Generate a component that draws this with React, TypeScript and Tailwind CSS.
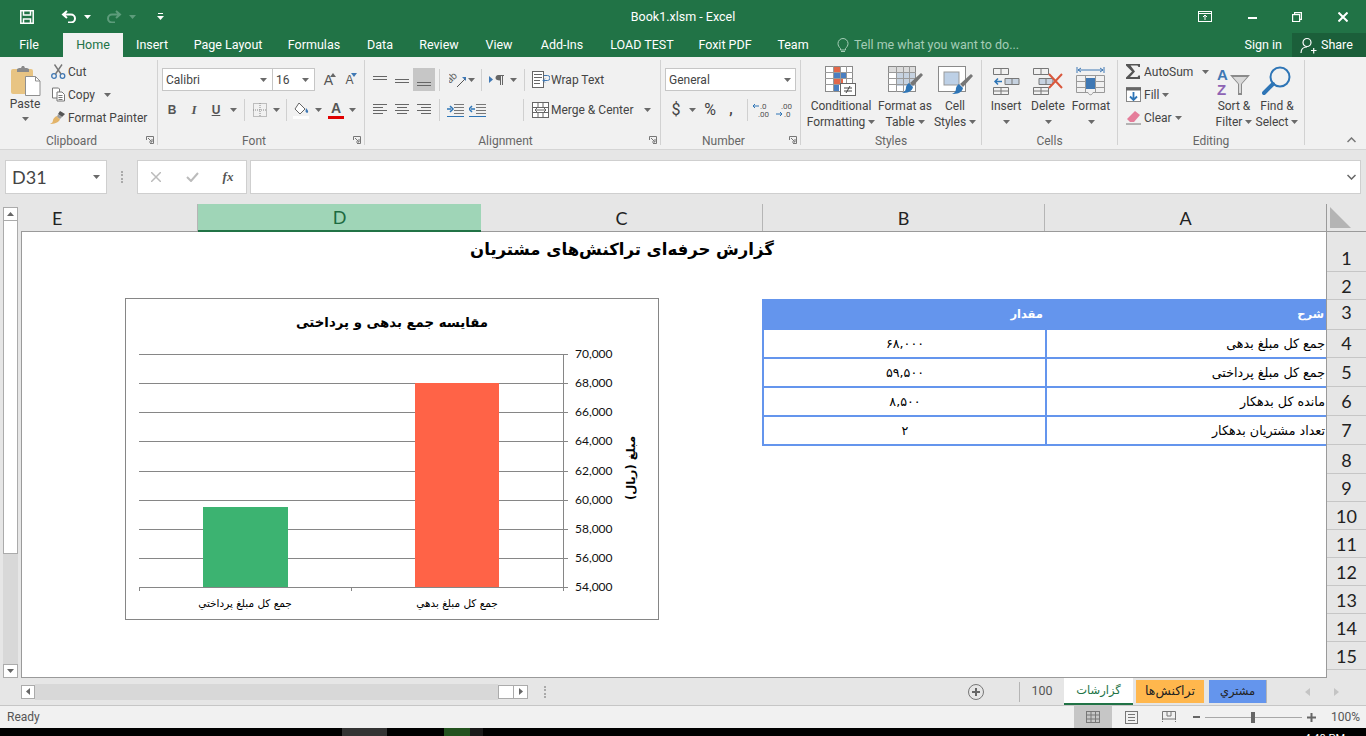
import React from "react";

const Caret = ({ c = "#6a6a6a" }: { c?: string }) => (
  <svg width="7" height="4" viewBox="0 0 7 4"><path d="M0 0h7L3.5 4z" fill={c} /></svg>
);
const Sep = ({ cls = "" }: { cls?: string }) => <div className={`w-px h-[22px] bg-[#d0d0d0] ${cls}`} />;
const Launcher = () => (
  <svg width="8" height="8" viewBox="0 0 8 8" fill="none" stroke="#777"><path d="M.5 4V.5H7.5V7.5H4" /><path d="M2 2l3.5 3.5M3 6h3V3" /></svg>
);
const Group = ({ cls, label, launch, children }: { cls: string; label: string; launch?: boolean; children: React.ReactNode }) => (
  <div className={`${cls} relative flex flex-col h-full border-r border-[#d2d2d2] my-0`}>
    <div className="h-[75px] shrink-0">{children}</div>
    <div className={`h-[15px] flex items-center justify-center text-[#666] text-[12px] leading-none ${launch ? "pr-[14px]" : ""}`}>{label}</div>
    {launch && <div className="absolute right-[3px] bottom-[1px]"><Launcher /></div>}
  </div>
);
const Big = ({ cls, icon, l1, l2, caret = true }: { cls: string; icon: React.ReactNode; l1: string; l2?: string; caret?: boolean }) => (
  <div className={`${cls} flex flex-col items-center pt-[6px]`}>
    <div className="h-[30px] flex items-center justify-center">{icon}</div>
    <div className="mt-[2px] h-[16px] leading-[16px] whitespace-nowrap">{l1}</div>
    <div className="h-[16px] leading-[16px] whitespace-nowrap flex items-center gap-[3px]">{l2}{caret && <Caret />}</div>
  </div>
);
const Small = ({ icon, text, caret, iconW = "w-[18px]", capCls = "" }: { icon: React.ReactNode; text: string; caret?: boolean; iconW?: string; capCls?: string }) => (
  <div className="h-[23px] flex items-center whitespace-nowrap">
    <div className={`${iconW} flex justify-center shrink-0`}>{icon}</div>
    <span className="ml-[1px]">{text}</span>
    {caret && <span className={`flex ${capCls}`}><Caret /></span>}
  </div>
);
const Slot = ({ cls, children }: { cls: string; children?: React.ReactNode }) => (
  <div className={`${cls} h-full flex items-center justify-center shrink-0`}>{children}</div>
);
const Lines = ({ rows, c = "#666" }: { rows: [number, number, number][]; c?: string }) => (
  <svg width="16" height="14" viewBox="0 0 16 14" stroke={c} strokeWidth="1">
    {rows.map(([x1, x2, y], i) => <line key={i} x1={x1} x2={x2} y1={y + 0.5} y2={y + 0.5} />)}
  </svg>
);
const Indent = ({ dir }: { dir: 1 | -1 }) => (
  <svg width="17" height="14" viewBox="0 0 17 14" fill="none">
    <path d="M7 1.5h10M7 4.5h10M7 7.5h10M7 10.5h10" stroke="#777" />
    <path d="M0 13.5h17" stroke="#2e75b6" />
    {dir === 1
      ? <path d="M0 6h4M3 3l3 3-3 3" stroke="#2e75b6" strokeWidth="1.5" />
      : <path d="M6 6H2M3 3L0 6l3 3" stroke="#2e75b6" strokeWidth="1.5" />}
  </svg>
);
const Paste = () => (
  <svg width="31" height="31" viewBox="0 0 31 31">
    <rect x="1" y="4" width="22" height="25" rx="2" fill="#e8c483" />
    <path d="M7 4l2-1h2l1-2h2l1 2h2l2 1v3H7z" fill="#8a8a8a" />
    <path d="M15.500 11.500h10l4.500 4.500v14.500h-14.500z" fill="#fff" stroke="#8f8f8f" />
    <path d="M25.500 11.500v4.500h4.500" fill="none" stroke="#8f8f8f" />
  </svg>
);
const Scissors = () => (
  <svg width="15" height="15" viewBox="0 0 15 15" fill="none">
    <circle cx="3" cy="12" r="2.300" stroke="#3f78b4" strokeWidth="1.300" />
    <circle cx="11.500" cy="12" r="2.300" stroke="#3f78b4" strokeWidth="1.300" />
    <path d="M4.500 10L11 .5M10 10L3.500.5" stroke="#777" strokeWidth="1.400" />
  </svg>
);
const CopyIc = () => (
  <svg width="15" height="15" viewBox="0 0 15 15" fill="#fff" stroke="#777">
    <path d="M1.500 1h6l1 1v9h-7z" /><path d="M6 5h5l2.500 2.500V14H6z" /><path d="M7.500 8.500h4M7.500 10.500h4M7.500 12.500h4" />
  </svg>
);
const Painter = () => (
  <svg width="17" height="15" viewBox="0 0 17 15">
    <path d="M10 1l5 3-3 3-4-3z" fill="#555" />
    <path d="M8 4l4 3-2 2-3-2z" fill="#9a9a9a" />
    <path d="M6.500 6L10 9.500C8 13 4 14 0 14c2-1 3-2 3-4 .5-2 2-3 3.500-4z" fill="#e3b469" />
  </svg>
);
const Grow = ({ up }: { up: boolean }) => (
  <div className="relative flex items-center justify-center h-full w-full">
    <span className={`${up ? "text-[14px]" : "text-[12px]"} text-[#555] font-['Liberation_Sans'] leading-none`}>A</span>
    <svg className="absolute top-[5px] right-[3px]" width="6" height="4" viewBox="0 0 6 4">
      <path d={up ? "M0 4h6L3 0z" : "M0 0h6L3 4z"} fill={up ? "#666" : "#3f78b4"} />
    </svg>
  </div>
);
const Borders = () => (
  <svg width="14" height="14" viewBox="0 0 14 14" fill="none" stroke="#888" strokeDasharray="1 1">
    <rect x=".5" y=".5" width="13" height="13" /><path d="M7 0v14M0 7h14" />
  </svg>
);
const Bucket = () => (
  <svg width="18" height="17" viewBox="0 0 18 17">
    <rect x="0" y="14" width="16" height="3" fill="#fdfdfd" />
    <path d="M6 1l6 6-5 5-5-5z" fill="#fff" stroke="#666" />
    <path d="M13 6c1.500 1.500 2.500 3 2 4.500-1 .8-2.500 0-2.500-1.500z" fill="#3f78b4" />
  </svg>
);
const Orient = () => (
  <svg width="18" height="18" viewBox="0 0 18 18">
    <text x="1" y="13" transform="rotate(-45 1 13)" fontSize="10" fill="#666" fontFamily="Roboto">ab</text>
    <path d="M8 16L16 8" stroke="#555" /><path d="M13 6h4v4z" fill="#3f78b4" />
  </svg>
);
const Rtl = () => (
  <svg width="16" height="12" viewBox="0 0 16 12">
    <path d="M0 2l4 3.500L0 9z" fill="#3f78b4" />
    <path d="M9 1h6v1h-1v9h-1V2h-1v9h-1V6.500C8 6.500 6.500 5.500 6.500 3.800S8 1 9 1z" fill="#666" />
  </svg>
);
const WrapIc = () => (
  <svg width="18" height="17" viewBox="0 0 18 17" fill="none" stroke="#666">
    <rect x=".5" y=".5" width="11" height="16" fill="#fff" />
    <path d="M2 3.500h8M2 6.500h8M2 9.500h6M2 12.500h6" />
    <path d="M12 4.500h3.500a2 2 0 010 5H11" stroke="#3f78b4" /><path d="M13 7.500l-2 2 2 2" stroke="#3f78b4" />
  </svg>
);
const MergeIc = () => (
  <svg width="17" height="16" viewBox="0 0 17 16" fill="#fff" stroke="#666">
    <rect x=".5" y=".5" width="16" height="15" />
    <path d="M.5 5.500h16M.5 10.500h16M6 .5v5M11 .5v5M6 10.500v5M11 10.500v5" />
    <path d="M3 8h11M5 6l-2 2 2 2M12 6l2 2-2 2" fill="none" />
  </svg>
);
const CondF = () => (
  <svg width="32" height="31" viewBox="0 0 32 31">
    <g fill="#fff" stroke="#8a8a8a"><rect x=".5" y=".5" width="27" height="25" /></g>
    <rect x="8" y="1" width="7" height="5" fill="#e2684a" /><rect x="8" y="7" width="13" height="5" fill="#4a7fc1" />
    <rect x="8" y="13" width="10" height="5" fill="#e2684a" /><rect x="8" y="19" width="6" height="6" fill="#4a7fc1" />
    <path d="M8.500 0v26M15.500 0v26M21.500 0v26M0 6.500h28M0 12.500h28M0 18.500h28" stroke="#9a9a9a" fill="none" />
    <rect x="15.500" y="17.500" width="15" height="12" fill="#fff" stroke="#666" />
    <path d="M19 22h8M19 25h8M25 20l-4 7" stroke="#444" />
  </svg>
);
const TableIc = () => (
  <svg width="35" height="31" viewBox="0 0 35 31">
    <rect x=".5" y=".5" width="27" height="25" fill="#fff" stroke="#8a8a8a" />
    <rect x="1" y="1" width="26" height="6" fill="#dcdcdc" />
    <rect x="8" y="7" width="19" height="13" fill="#c6d2e0" />
    <path d="M8.500 0v26M15.500 0v26M21.500 0v26M0 6.500h28M0 12.500h28M0 18.500h28" stroke="#9a9a9a" fill="none" />
    <path d="M33 7l2 2-10 11-3-3z" fill="#777" />
    <path d="M21 17l4 4c-1 5-6 6-11 6 3-1 4-3 4-6 .5-2 1.500-3 3-4z" fill="#2e75b6" />
  </svg>
);
const CellIc = () => (
  <svg width="35" height="31" viewBox="0 0 35 31">
    <rect x=".5" y=".5" width="27" height="25" fill="#fff" stroke="#8a8a8a" />
    <rect x="6" y="6" width="15" height="13" fill="#bdd0e6" stroke="#999" />
    <path d="M33 8l2 2-10 11-3-3z" fill="#777" />
    <path d="M21 18l4 4c-1 5-6 6-11 6 3-1 4-3 4-6 .5-2 1.500-3 3-4z" fill="#2e75b6" />
  </svg>
);
const InsertIc = () => (
  <svg width="28" height="30" viewBox="0 0 28 30" fill="none" stroke="#777">
    <path d="M1.500 2.500h15v6h-15zM9 2.500v6M1.500 21.500h15v7h-15zM1.500 25h15M9 21.500v7" />
    <path d="M13 12.500h14v6H13zM20 12.500v6" fill="#c6d2e0" />
    <path d="M10 15.500H3M6 12.500l-3 3 3 3" stroke="#2e75b6" strokeWidth="1.500" />
  </svg>
);
const DeleteIc = () => (
  <svg width="32" height="30" viewBox="0 0 32 30" fill="none" stroke="#777">
    <path d="M1.500 2.500h15v6h-15zM9 2.500v6M1.500 21.500h15v7h-15zM1.500 25h15M9 21.500v7" />
    <path d="M7 12.500h14v6H7zM14 12.500v6" fill="#c6d2e0" />
    <path d="M17 8l13 14M30 8L17 22" stroke="#d9573c" strokeWidth="2" />
  </svg>
);
const FormatIc = () => (
  <svg width="30" height="31" viewBox="0 0 30 31" fill="none">
    <path d="M1 1v6M28 1v6M2 4h25M5 2L2 4l3 2M24 2l3 2-3 2" stroke="#3f78b4" />
    <path d="M.5 9.500h28v17H17c-1 3-4 3-5 0H.5zM9.500 9.500v17M19.500 9.500v17M.5 15.500h28M.5 21.500h28" stroke="#999" />
    <rect x="10" y="12" width="9" height="11" fill="#3f78b4" />
  </svg>
);
const SortIc = () => (
  <svg width="36" height="31" viewBox="0 0 36 31">
    <text x="1" y="14" fontSize="15" fontWeight="bold" fontFamily="Liberation Sans" fill="#3f78b4">A</text>
    <text x="1" y="29" fontSize="15" fontWeight="bold" fontFamily="Liberation Sans" fill="#8e63b4">Z</text>
    <path d="M14 9h20l-8 9v11h-4V18z" fill="#8a8a8a" />
    <path d="M23 18v9h2V18l6-7H17z" fill="#d9d9d9" />
  </svg>
);
const FindIc = () => (
  <svg width="30" height="30" viewBox="0 0 30 30" fill="none">
    <circle cx="18" cy="11" r="9.500" stroke="#2e75b6" strokeWidth="2" />
    <path d="M11 18L2 27" stroke="#2e75b6" strokeWidth="4" strokeLinecap="round" />
  </svg>
);

const Rows = [
  { n: 1, h: "h-[40px]", p: "pb-[3px]" },
  { n: 2, h: "h-[28px]", p: "pb-[3px]" },
  { n: 3, h: "h-[30px]", p: "pb-[7px]" },
  { n: 4, h: "h-[28px]", p: "pb-[4px]" },
  { n: 5, h: "h-[29px]", p: "pb-[4px]" },
  { n: 6, h: "h-[29px]", p: "pb-[4px]" },
  { n: 7, h: "h-[29px]", p: "pb-[4px]" },
  { n: 8, h: "h-[29px]", p: "pb-[3px]" },
  { n: 9, h: "h-[28px]", p: "pb-[3px]" },
  { n: 10, h: "h-[28px]", p: "pb-[3px]" },
  { n: 11, h: "h-[28px]", p: "pb-[3px]" },
  { n: 12, h: "h-[28px]", p: "pb-[3px]" },
  { n: 13, h: "h-[28px]", p: "pb-[3px]" },
  { n: 14, h: "h-[28px]", p: "pb-[3px]" },
  { n: 15, h: "h-[28px]", p: "pb-[3px]" },
];
const tableRows = [
  ["جمع کل مبلغ بدهی", "۶۸,۰۰۰"],
  ["جمع کل مبلغ پرداختی", "۵۹,۵۰۰"],
  ["مانده کل بدهکار", "۸,۵۰۰"],
  ["تعداد مشتریان بدهکار", "۲"],
];
const ticks = [70, 68, 66, 64, 62, 60, 58, 56, 54];
const yOf = (v: number) => 44 + ((70 - v) / 16) * 233;
const fa = "DejaVu Sans, sans-serif";

const Chart = () => (
  <svg width="534" height="322" viewBox="0 0 534 322" className="block">
    <rect x=".5" y=".5" width="533" height="321" fill="#fff" stroke="#868686" />
    <text x="267" y="29" textAnchor="middle" direction="rtl" fontSize="13.300" fontWeight="bold" fontFamily={fa} fill="#000">مقایسه جمع بدهی و پرداختی</text>
    {ticks.map((t) => (
      <g key={t}>
        <line x1="14" x2="443" y1={Math.round(yOf(t) + 12) + 0.5} y2={Math.round(yOf(t) + 12) + 0.5} stroke="#868686" />
        <text x="450" y={Math.round(yOf(t) + 12) + 3.5} fontSize="12" fontFamily="Lato, sans-serif" fill="#111">{t},000</text>
      </g>
    ))}
    <line x1="438.500" x2="438.500" y1="56" y2="289" stroke="#868686" />
    {[14, 226, 438].map((x) => <line key={x} x1={x + 0.5} x2={x + 0.5} y1="289" y2="293" stroke="#868686" />)}
    <rect x="78" y="209" width="85" height="80" fill="#3cb371" />
    <rect x="290" y="85" width="84" height="204" fill="#ff6347" />
    <text x="120" y="309" textAnchor="middle" direction="rtl" fontSize="10.500" fontFamily={fa} fill="#000">جمع کل مبلغ پرداختي</text>
    <text x="332" y="309" textAnchor="middle" direction="rtl" fontSize="10.500" fontFamily={fa} fill="#000">جمع کل مبلغ بدهي</text>
    <text transform="translate(510 170) rotate(-90)" textAnchor="middle" direction="rtl" fontSize="11.500" fontWeight="bold" fontFamily={fa} fill="#000">مبلغ (ریال)</text>
  </svg>
);

export default function App() {
  return (
    <div className="w-[1366px] h-[736px] overflow-hidden flex flex-col bg-[#e6e6e6] font-['Roboto',sans-serif] text-[12px] text-[#444]">
      {/* Title bar */}
      <div className="h-[33px] bg-[#217346] flex items-center text-white relative shrink-0">
        <Slot cls="w-[54px]">
          <svg width="14" height="14" viewBox="0 0 14 14" fill="none" stroke="#fff" strokeWidth="1.500"><path d="M.8.8h12.400v12.400H.8z" /><path d="M3.500 1v4h7V1M3.500 13V9h7v4" /></svg>
        </Slot>
        <Slot cls="w-[30px]">
          <svg width="16" height="13" viewBox="0 0 16 13" fill="none" stroke="#fff" strokeWidth="2"><path d="M6 1L2 4.500 6 8M2 4.500h8a4 4 0 010 8H7" /></svg>
        </Slot>
        <Slot cls="w-[7px]"><Caret c="#fff" /></Slot>
        <Slot cls="w-[30px] ml-[8px]">
          <svg width="16" height="13" viewBox="0 0 16 13" fill="none" stroke="#5d9c7b" strokeWidth="2"><path d="M10 1l4 3.500L10 8M14 4.500H6a4 4 0 000 8h3" /></svg>
        </Slot>
        <Slot cls="w-[7px]"><Caret c="#5d9c7b" /></Slot>
        <Slot cls="w-[36px] ml-[6px]">
          <svg width="7" height="7" viewBox="0 0 7 7"><path d="M1 0h5v1H1zM0 3h7L3.500 7z" fill="#fff" /></svg>
        </Slot>
        <div className="absolute inset-x-0 top-[8px] text-center text-[12.500px] leading-[17px]">Book1.xlsm - Excel</div>
        <div className="ml-auto flex items-center h-full">
          <Slot cls="w-[50px]">
            <svg width="14" height="11" viewBox="0 0 14 11" fill="none" stroke="#fff"><rect x=".5" y=".5" width="13" height="10" /><path d="M0 2.500h14M7 9V4M5 6l2-2 2 2" /></svg>
          </Slot>
          <Slot cls="w-[44px]"><div className="w-[9px] h-[2px] bg-white mt-[2px]" /></Slot>
          <Slot cls="w-[46px]">
            <svg width="10" height="10" viewBox="0 0 10 10" fill="none" stroke="#fff" strokeWidth="1.200"><rect x=".6" y="2.600" width="7" height="7" /><path d="M2.600 2.600V.6h6.800v6.800H7.600" /></svg>
          </Slot>
          <Slot cls="w-[46px]">
            <svg width="10" height="10" viewBox="0 0 10 10" stroke="#fff" strokeWidth="2"><path d="M.5.500l9 9M9.500.500l-9 9" /></svg>
          </Slot>
        </div>
      </div>
      {/* Tabs */}
      <div className="h-[24px] bg-[#217346] flex text-white text-[12.500px] shrink-0">
        <div className="w-[58px] flex items-center justify-center">File</div>
        <div className="w-[60px] ml-[5px] bg-[#f1f1f1] text-[#217346] flex items-center justify-center">Home</div>
        {[["Insert", "w-[58px]"], ["Page Layout", "w-[94px]"], ["Formulas", "w-[78px]"], ["Data", "w-[54px]"], ["Review", "w-[64px]"], ["View", "w-[56px]"], ["Add-Ins", "w-[70px]"], ["LOAD TEST", "w-[90px]"], ["Foxit PDF", "w-[76px]"], ["Team", "w-[60px]"]].map(([t, w]) => (
          <div key={t} className={`${w} flex items-center justify-center whitespace-nowrap`}>{t}</div>
        ))}
        <div className="ml-[14px] flex items-center text-[#a5cdb6]">
          <svg width="12" height="15" viewBox="0 0 12 15" fill="none" stroke="#a5cdb6"><path d="M3.500 10.500C2 9 1 7.500 1 5.500a5 5 0 0110 0c0 2-1 3.500-2.500 5v1.500h-5zM4 13.500h4" /></svg>
          <span className="ml-[5px] w-[160px] whitespace-nowrap">Tell me what you want to do...</span>
        </div>
        <div className="ml-auto flex items-center h-full">
          <span className="mr-[10px]">Sign in</span>
          <div className="w-[74px] h-full bg-[#1b5f3a] flex items-center pl-[8px]">
            <svg width="17" height="17" viewBox="0 0 17 17" fill="none" stroke="#fff" strokeWidth="1.200"><circle cx="7" cy="5.500" r="4" /><path d="M1 16c0-4 2.500-6 6-6M11 13.500h5.500M13.700 11v5.500" /></svg>
            <span className="ml-[4px]">Share</span>
          </div>
        </div>
      </div>
      {/* Ribbon */}
      <div className="h-[93px] bg-[#f1f1f1] border-b border-[#d5d5d5] flex items-stretch pt-[3px] pb-[4px] shrink-0 relative">
        <Group cls="w-[158px]" label="Clipboard" launch>
          <div className="flex h-full">
            <div className="w-[50px] flex flex-col items-center pt-[5px]">
              <Paste />
              <div className="h-[16px] leading-[16px]">Paste</div>
              <div className="h-[14px] flex items-center"><Caret /></div>
            </div>
            <div className="flex flex-col text-[12px] -ml-px">
              <Small icon={<Scissors />} text="Cut" />
              <Small icon={<CopyIc />} text="Copy" caret capCls="ml-[9px]" />
              <Small icon={<Painter />} text="Format Painter" />
            </div>
          </div>
        </Group>
        <Group cls="w-[207px]" label="Font" launch>
          <div className="flex h-[23px] mt-[8px] pl-[4px]">
            <div className="w-[111px] bg-white border border-[#c6c6c6] flex items-center justify-between pl-[3px] pr-[5px] text-[#444]"><span>Calibri</span><Caret /></div>
            <div className="w-[43px] -ml-px bg-white border border-[#c6c6c6] flex items-center justify-between pl-[3px] pr-[5px]"><span>16</span><Caret /></div>
            <Slot cls="w-[21px] ml-[3px]"><Grow up /></Slot>
            <Slot cls="w-[21px]"><Grow up={false} /></Slot>
          </div>
          <div className="flex h-[22px] mt-[8px] items-center text-[#555]">
            <Slot cls="w-[22px] ml-[3px]"><span className="font-['Liberation_Sans'] font-bold text-[12px]">B</span></Slot>
            <Slot cls="w-[22px]"><span className="font-['Liberation_Serif'] italic font-bold text-[13px]">I</span></Slot>
            <Slot cls="w-[22px]"><span className="font-['Liberation_Sans'] font-bold underline text-[12px]">U</span></Slot>
            <Slot cls="w-[12px]"><Caret /></Slot>
            <Sep cls="ml-[5px]" />
            <Slot cls="w-[22px] ml-[4px]"><Borders /></Slot>
            <Slot cls="w-[12px] -ml-px"><Caret /></Slot>
            <Sep cls="ml-[4px]" />
            <Slot cls="w-[22px] ml-[4px]"><Bucket /></Slot>
            <Slot cls="w-[12px] -ml-px"><Caret /></Slot>
            <Slot cls="w-[22px] ml-px">
              <div className="flex flex-col items-center leading-none">
                <span className="font-['Liberation_Sans'] font-bold text-[14px] leading-[13px] text-[#555]">A</span>
                <div className="w-[16px] h-[3px] bg-[#e00000] mt-[1px]" />
              </div>
            </Slot>
            <Slot cls="w-[12px] -ml-px"><Caret /></Slot>
          </div>
        </Group>
        <Group cls="w-[296px]" label="Alignment" launch>
          <div className="flex h-[23px] mt-[8px] items-center pl-[4px]">
            <Slot cls="w-[22px]"><Lines rows={[[1, 15, 3], [1, 15, 6]]} /></Slot>
            <Slot cls="w-[22px]"><Lines rows={[[1, 15, 6], [1, 15, 9]]} /></Slot>
            <Slot cls="w-[22px] bg-[#c6c6c6]"><Lines rows={[[1, 15, 9], [1, 15, 12]]} /></Slot>
            <Sep cls="ml-[4px]" />
            <Slot cls="w-[18px] ml-[9px]"><Orient /></Slot>
            <Slot cls="w-[8px]"><Caret /></Slot>
            <Sep cls="ml-[6px]" />
            <Slot cls="w-[18px] ml-[6px]"><Rtl /></Slot>
            <Slot cls="w-[8px] ml-[3px]"><Caret /></Slot>
            <Sep cls="ml-[7px]" />
            <Slot cls="w-[18px] ml-[7px]"><WrapIc /></Slot>
            <span className="ml-[1px] whitespace-nowrap">Wrap Text</span>
          </div>
          <div className="flex h-[22px] mt-[8px] items-center pl-[4px]">
            <Slot cls="w-[22px]"><Lines rows={[[1, 15, 1], [1, 11, 4], [1, 15, 7], [1, 11, 10]]} /></Slot>
            <Slot cls="w-[22px]"><Lines rows={[[1, 15, 1], [3, 13, 4], [1, 15, 7], [3, 13, 10]]} /></Slot>
            <Slot cls="w-[22px]"><Lines rows={[[1, 15, 1], [5, 15, 4], [1, 15, 7], [5, 15, 10]]} /></Slot>
            <Sep cls="ml-[4px]" />
            <Slot cls="w-[22px] ml-[4px]"><Indent dir={1} /></Slot>
            <Slot cls="w-[22px]"><Indent dir={-1} /></Slot>
            <Sep cls="ml-[35px]" />
            <Slot cls="w-[18px] ml-[7px]"><MergeIc /></Slot>
            <span className="ml-[2px] whitespace-nowrap">Merge & Center</span>
            <Slot cls="w-[7px] ml-[11px]"><Caret /></Slot>
          </div>
        </Group>
        <Group cls="w-[140px]" label="Number" launch>
          <div className="ml-[4px] mt-[8px] w-[131px] h-[23px] bg-white border border-[#c6c6c6] flex items-center justify-between pl-[3px] pr-[4px]"><span>General</span><Caret /></div>
          <div className="flex h-[22px] mt-[8px] items-center">
            <Slot cls="w-[22px] ml-[4px]"><span className="text-[16px]">$</span></Slot>
            <Slot cls="w-[8px] ml-px"><Caret /></Slot>
            <Slot cls="w-[22px] ml-[3px]"><span className="text-[16px]">%</span></Slot>
            <Slot cls="w-[22px] -ml-px"><span className="text-[14px] font-bold leading-none -mt-[3px]">,</span></Slot>
            <Sep cls="ml-[5px]" />
            <Slot cls="w-[22px] ml-[3px]">
              <svg width="20" height="16" viewBox="0 0 20 16"><text x="8" y="7" fontSize="8" fill="#555" fontFamily="Roboto">.0</text><text x="6" y="15" fontSize="8" fill="#555" fontFamily="Roboto">.00</text><path d="M7 4H1M3 2L1 4l2 2" fill="none" stroke="#2e75b6" /></svg>
            </Slot>
            <Slot cls="w-[22px] ml-px">
              <svg width="20" height="16" viewBox="0 0 20 16"><text x="6" y="7" fontSize="8" fill="#555" fontFamily="Roboto">.00</text><text x="9" y="15" fontSize="8" fill="#555" fontFamily="Roboto">.0</text><path d="M1 12h6M5 10l2 2-2 2" fill="none" stroke="#2e75b6" /></svg>
            </Slot>
          </div>
        </Group>
        <Group cls="w-[181px]" label="Styles">
          <div className="flex h-full">
            <Big cls="w-[80px]" icon={<CondF />} l1="Conditional" l2="Formatting" />
            <Big cls="w-[48px]" icon={<TableIc />} l1="Format as" l2="Table" />
            <Big cls="w-[52px]" icon={<CellIc />} l1="Cell" l2="Styles" />
          </div>
        </Group>
        <Group cls="w-[136px]" label="Cells">
          <div className="flex h-full">
            <Big cls="w-[48px]" icon={<InsertIc />} l1="Insert" />
            <Big cls="w-[36px]" icon={<DeleteIc />} l1="Delete" />
            <Big cls="w-[50px]" icon={<FormatIc />} l1="Format" />
          </div>
        </Group>
        <Group cls="w-[187px]" label="Editing">
          <div className="flex h-full">
            <div className="w-[95px] flex flex-col pl-[5px]">
              <Small icon={<svg width="15" height="15" viewBox="0 0 15 15"><path d="M0 0h14v3h-1.500l-1-1.500H4.500L9 7.500 4 13h7.500l1-1.500H14V15H0v-1.500L6 7.500 0 1.500z" fill="#555" /></svg>} text="AutoSum" caret capCls="ml-[9px]" iconW="w-[20px]" />
              <Small icon={<svg width="15" height="15" viewBox="0 0 15 15" fill="none"><rect x=".5" y=".5" width="14" height="14" fill="#fff" stroke="#888" /><path d="M0 2h15" stroke="#666" strokeWidth="3" /><path d="M7.500 5v8M4 9.500l3.500 3.500L11 9.500" stroke="#2e75b6" strokeWidth="1.800" /></svg>} text="Fill" caret capCls="ml-[3px]" iconW="w-[20px]" />
              <Small icon={<svg width="15" height="14" viewBox="0 0 15 14"><path d="M9 0l5 4-6 7H4L1 8z" fill="#e57d9a" /><path d="M0 13h15" stroke="#777" /></svg>} text="Clear" caret capCls="ml-[3px]" iconW="w-[20px]" />
            </div>
            <Big cls="w-[42px]" icon={<SortIc />} l1="Sort &" l2="Filter" />
            <Big cls="w-[44px]" icon={<FindIc />} l1="Find &" l2="Select" />
          </div>
        </Group>
        <div className="flex-1 flex items-end justify-end pr-[10px] pb-[2px]">
          <svg width="9" height="6" viewBox="0 0 9 6" fill="none" stroke="#777" strokeWidth="1.500"><path d="M.5 5l4-4 4 4" /></svg>
        </div>
      </div>
      {/* Formula bar */}
      <div className="h-[54px] flex items-start pt-[10px] pl-[5px] shrink-0">
        <div className="w-[102px] h-[34px] bg-white border border-[#cfcfcf] flex items-center justify-between pl-[6px] pr-[6px] text-[18px] font-['Lato'] text-[#444]">
          <span>D31</span><Caret />
        </div>
        <Slot cls="w-[30px] !h-[34px] text-[#999]"><span className="w-[2px] h-[12px] border-l-2 border-dotted border-[#aaa]" /></Slot>
        <div className="w-[110px] h-[34px] bg-white border border-[#cfcfcf] flex items-center">
          <Slot cls="w-[36px]"><svg width="10" height="10" viewBox="0 0 10 10" stroke="#bbb" strokeWidth="1.500"><path d="M0 0l10 10M10 0L0 10" /></svg></Slot>
          <Slot cls="w-[36px]"><svg width="13" height="10" viewBox="0 0 13 10" fill="none" stroke="#bbb" strokeWidth="2"><path d="M1 5l4 4 7-8" /></svg></Slot>
          <Slot cls="w-[36px]"><span className="font-['Liberation_Serif'] italic font-bold text-[13px] text-[#555]">fx</span></Slot>
        </div>
        <div className="ml-[3px] w-[1111px] h-[34px] bg-white border border-[#cfcfcf] flex items-center justify-end pr-[4px]">
          <svg width="9" height="6" viewBox="0 0 9 6" fill="none" stroke="#666" strokeWidth="1.500"><path d="M.5 1l4 4 4-4" /></svg>
        </div>
      </div>
      {/* Sheet */}
      <div className="h-[474px] flex shrink-0 font-['Lato',sans-serif]">
        <div className="w-[21px] pl-[3px] pt-[3px] flex flex-col shrink-0">
          <div className="w-[15px] h-[14px] bg-white border border-[#ababab] flex items-center justify-center">
            <svg width="7" height="4" viewBox="0 0 7 4"><path d="M0 4h7L3.500 0z" fill="#666" /></svg>
          </div>
          <div className="w-[15px] h-[333px] bg-white border-x border-b border-[#ababab]" />
          <div className="w-[15px] flex-1 bg-[#d8d8d8]" />
          <div className="w-[15px] h-[14px] bg-white border border-[#ababab] flex items-center justify-center">
            <svg width="7" height="4" viewBox="0 0 7 4"><path d="M0 0h7L3.500 4z" fill="#666" /></svg>
          </div>
        </div>
        <div className="w-[1305px] flex flex-col shrink-0">
          <div className="h-[28px] flex text-[18px] leading-none text-[#222] border-b border-[#9a9a9a] shrink-0">
            <div className="w-[177px] flex items-center pl-[31px] border-r border-[#b5b5b5]">E</div>
            <div className="w-[283px] -mb-px bg-[#9fd5b7] border-b-2 border-[#217346] flex items-center justify-center text-[#1c6b41]">D</div>
            <div className="w-[282px] flex items-center justify-center border-r border-[#b5b5b5]">C</div>
            <div className="w-[282px] flex items-center justify-center border-r border-[#b5b5b5]">B</div>
            <div className="w-[281px] flex items-center justify-center">A</div>
          </div>
          <div className="flex-1 bg-white border-l border-b border-[#9a9a9a] flex flex-col font-['DejaVu_Sans',sans-serif]">
            <div className="h-[36px] flex items-center justify-center pr-[104px] font-bold text-[16.500px] text-black" dir="rtl">گزارش حرفه‌ای تراکنش‌های مشتریان</div>
            <div className="flex mt-[30px] pl-[103px]">
              <Chart />
              <div className="ml-[103px] w-[564px] -mt-px pt-[2px] text-[12.700px] text-black" dir="rtl">
                <div className="h-[31px] bg-[#6495ed] text-white text-[11.500px] font-bold grid grid-cols-[281px_283px] items-center">
                  <div className="pr-[2px]">شرح</div>
                  <div className="pr-[2px]">مقدار</div>
                </div>
                {tableRows.map(([a, b]) => (
                  <div key={a} className="h-[29px] grid grid-cols-[281px_283px] border-b-2 border-l-2 border-[#6495ed]">
                    <div className="border-l-2 border-[#6495ed] pr-px flex items-center whitespace-nowrap">{a}</div>
                    <div className="flex items-center justify-center pl-[3px]">{b}</div>
                  </div>
                ))}
              </div>
            </div>
          </div>
        </div>
        <div className="flex-1 border-l border-[#9a9a9a] flex flex-col text-[18px] text-[#222]">
          <div className="h-[28px] shrink-0 border-b border-[#9a9a9a] pl-[3px] pt-[3px]">
            <svg width="21" height="21" viewBox="0 0 21 21"><path d="M21 21H0V0z" fill="#b4b4b4" /></svg>
          </div>
          <div className="flex-1 overflow-hidden">
            {Rows.map((r) => (
              <div key={r.n} className={`${r.h} ${r.p} border-b border-[#c6c6c6] flex items-end justify-center leading-[20px] box-border`}>{r.n}</div>
            ))}
          </div>
        </div>
      </div>
      {/* Sheet tabs */}
      <div className="h-[28px] flex items-center shrink-0 border-b border-[#c6c6c6] relative">
        <div className="ml-[21px] w-[14px] h-[14px] bg-white border border-[#ababab] flex items-center justify-center">
          <svg width="4" height="7" viewBox="0 0 4 7"><path d="M4 0v7L0 3.500z" fill="#666" /></svg>
        </div>
        <div className="w-[463px] h-[16px] bg-[#d8d8d8]" />
        <div className="w-[16px] h-[14px] bg-white border border-[#ababab]" />
        <div className="w-[15px] h-[14px] bg-white border border-[#ababab] -ml-px flex items-center justify-center">
          <svg width="4" height="7" viewBox="0 0 4 7"><path d="M0 0v7l4-3.500z" fill="#666" /></svg>
        </div>
        <div className="ml-[16px] h-[12px] border-l-2 border-dotted border-[#aaa]" />
        <div className="ml-[422px] w-[16px] h-[16px] rounded-full border border-[#777] flex items-center justify-center">
          <svg width="10" height="10" viewBox="0 0 10 10" stroke="#666" strokeWidth="2"><path d="M5 1v8M1 5h8" /></svg>
        </div>
        <div className="ml-[35px] h-[20px] border-l border-[#b5b5b5]" />
        <div className="w-[44px] text-center text-[12.500px] text-[#555]">100</div>
        <div dir="rtl" className="flex h-full font-['DejaVu_Sans',sans-serif] text-[11.500px] text-[#222] flex-row-reverse">
          <div className="w-[69px] h-full bg-white border-b-2 border-[#217346] text-[#217346] flex items-center justify-center">گزارشات</div>
          <div className="w-[68px] h-[23px] mt-[2px] ml-[3px] bg-[#ffb74d] flex items-center justify-center text-[12.500px]">تراکنش‌ها</div>
          <div className="w-[57px] h-[23px] mt-[2px] ml-[5px] bg-[#6495ed] flex items-center justify-center">مشتري</div>
        </div>
        <div className="h-[23px] border-l border-[#b5b5b5]" />
        <div className="ml-[38px] flex items-center">
          <svg width="5" height="8" viewBox="0 0 5 8"><path d="M5 0v8L0 4z" fill="#c4c4c4" /></svg>
          <svg className="ml-[24px]" width="5" height="8" viewBox="0 0 5 8"><path d="M0 0v8l5-4z" fill="#c4c4c4" /></svg>
        </div>
      </div>
      {/* Status */}
      <div className="h-[22px] bg-[#f1f1f1] flex items-center text-[12px] text-[#555] shrink-0">
        <span className="ml-[7px]">Ready</span>
        <div className="ml-auto flex items-center h-full">
          <div className="w-[38px] h-full bg-[#c6c6c6] flex items-center justify-center">
            <svg width="14" height="12" viewBox="0 0 14 12" fill="none" stroke="#777"><rect x=".5" y=".5" width="13" height="11" /><path d="M5 0v12M9.500 0v12M0 4h14M0 8h14" /></svg>
          </div>
          <Slot cls="w-[38px]">
            <svg width="13" height="13" viewBox="0 0 13 13" fill="none" stroke="#777"><rect x=".5" y=".5" width="12" height="12" /><path d="M3 3.500h7M3 6.500h7M3 9.500h7" /></svg>
          </Slot>
          <Slot cls="w-[38px]">
            <svg width="14" height="12" viewBox="0 0 14 12" fill="none" stroke="#777"><path d="M.5 8V.5h13V8M.5 8h13M5 .5V5h4V.5" /><path d="M.5 8v3.500M13.500 8v3.500" strokeDasharray="1 1" /></svg>
          </Slot>
          <div className="ml-[5px] w-[7px] h-[2px] bg-[#666]" />
          <div className="ml-[5px] w-[97px] h-px bg-[#a8a8a8] relative">
            <div className="absolute left-[46px] -top-[5px] w-[4px] h-[11px] bg-[#666]" />
          </div>
          <svg className="ml-[5px]" width="9" height="9" viewBox="0 0 9 9" stroke="#666" strokeWidth="2"><path d="M4.500 0v9M0 4.500h9" /></svg>
          <div className="w-[50px] pl-[15px]">100%</div>
        </div>
      </div>
      {/* Taskbar strip */}
      <div className="flex-1 bg-black flex overflow-hidden">
        <div className="ml-[342px] w-[45px] bg-[#333]" />
        <div className="ml-[57px] w-[26px] bg-[#23521f]" />
        <div className="w-[13px] bg-[#1a1a1a]" />
        <div className="ml-auto mr-[21px] text-white text-[11px] leading-[16px] mt-[3px]">4:48 PM</div>
      </div>
    </div>
  );
}
